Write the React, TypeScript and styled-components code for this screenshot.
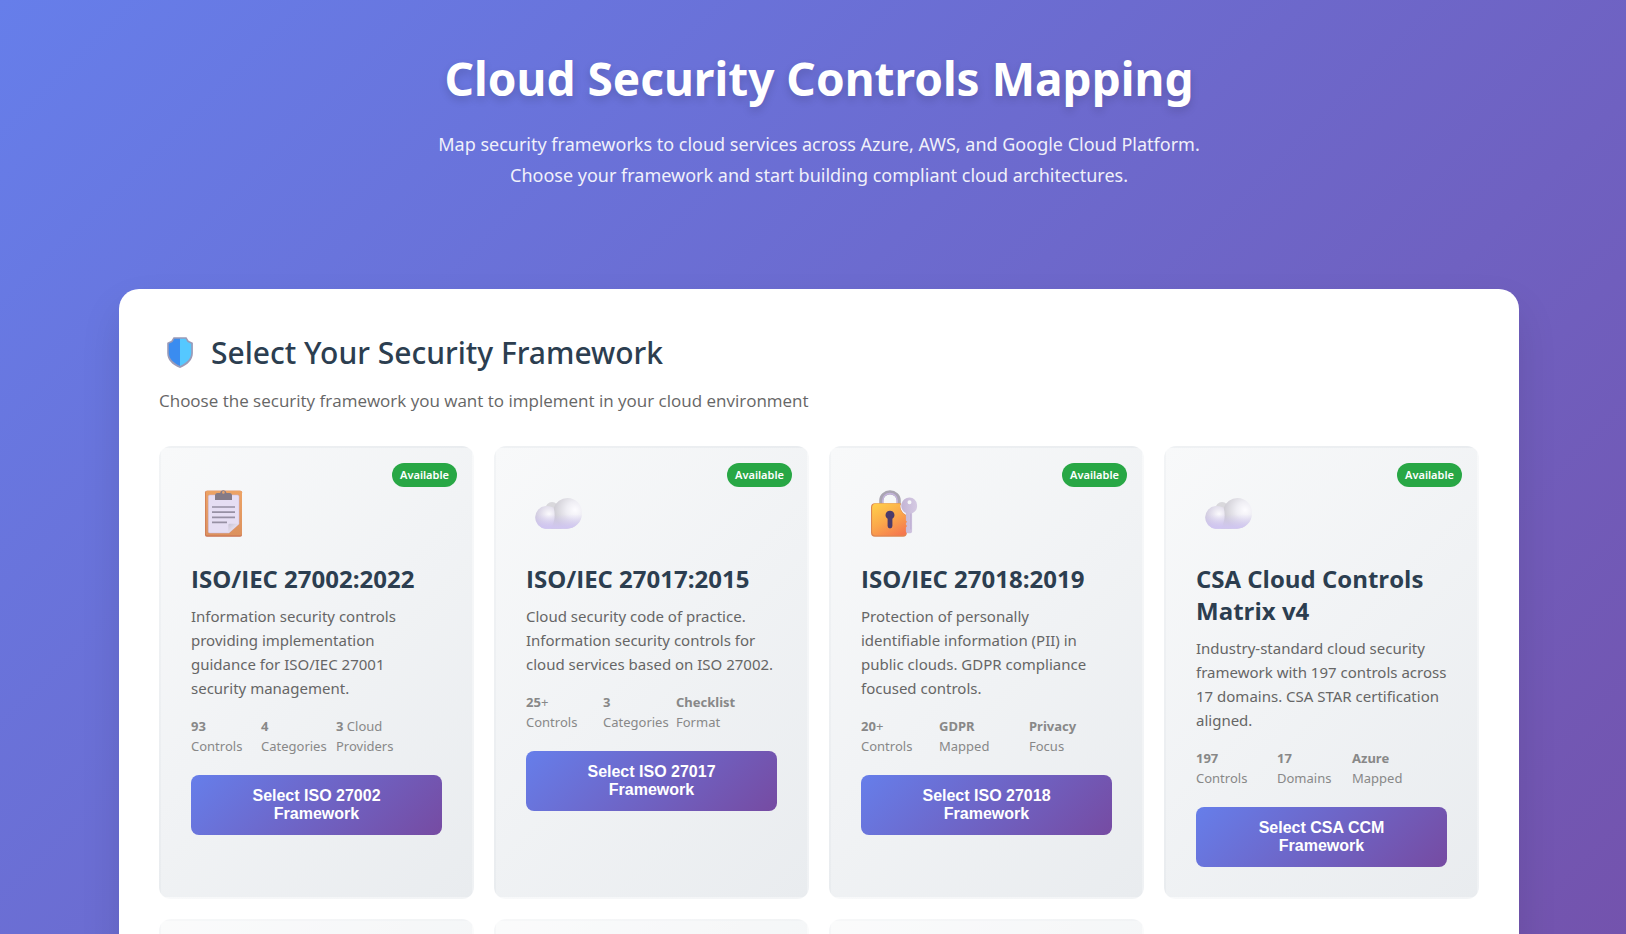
import React from 'react';
import styled, { createGlobalStyle } from 'styled-components';

const GlobalStyle = createGlobalStyle`
  * { box-sizing: border-box; margin: 0; padding: 0; }
  body { font-family: "Noto Sans", "Open Sans", sans-serif; color: #333; }
`;

const Page = styled.div`
  height: 100vh;
  overflow: hidden;
  padding-left: 12px;
  background: linear-gradient(135deg, #667eea 0%, #764ba2 100%) 0 0 / 100% 150vh;
`;

const Container = styled.div`
  max-width: 1400px;
  margin: 0 auto;
`;

const Hero = styled.header`
  padding: 40px 20px 98px;
  text-align: center;
  color: #fff;
`;

const HeroTitle = styled.h1`
  margin-bottom: 13px;
  font-size: 46px;
  font-weight: 700;
  line-height: 76px;
  text-shadow: 0 4px 8px rgba(0, 0, 0, 0.15);
`;

const HeroText = styled.p`
  max-width: 800px;
  margin: 0 auto;
  font-size: 18px;
  line-height: 31px;
  opacity: 0.9;
`;

const Panel = styled.main`
  padding: 40px;
  border-radius: 20px;
  background: #fff;
  box-shadow: 0 20px 40px rgba(0, 0, 0, 0.1);
`;

const SectionTitle = styled.h2`
  display: flex;
  align-items: center;
  gap: 10px;
  margin-bottom: 9px;
  color: #2c3e50;
  font-size: 30px;
  font-weight: 500;
  line-height: 48px;
`;

const SectionText = styled.p`
  margin-bottom: 31px;
  color: #666;
  font-family: "Open Sans", "Noto Sans", sans-serif;
  font-size: 17px;
  line-height: 29px;
`;

const CardGrid = styled.div`
  display: grid;
  grid-template-columns: repeat(auto-fit, minmax(300px, 1fr));
  gap: 20px;
`;

const Card = styled.article<{ $upcoming?: boolean }>`
  position: relative;
  min-height: 240px;
  padding: 30px;
  border: 2px solid transparent;
  border-radius: 12px;
  background: linear-gradient(135deg, #f8f9fa 0%, #e9ecef 100%);
  opacity: ${(p) => (p.$upcoming ? 0.6 : 1)};
`;

const Badge = styled.span`
  position: absolute;
  top: 15px;
  right: 15px;
  padding: 0 8px;
  border-radius: 12px;
  background: #28a745;
  color: #fff;
  font-size: 11px;
  font-weight: 600;
  line-height: 24px;
`;

const CardIcon = styled.div`
  height: 70px;
  margin-bottom: 15px;
`;

const CardTitle = styled.h3`
  margin-bottom: 9px;
  color: #2c3e50;
  font-family: "Open Sans", "Noto Sans", sans-serif;
  font-size: 24px;
  font-weight: 700;
  line-height: 32px;
`;

const CardText = styled.p`
  margin-bottom: 16px;
  color: #666;
  font-size: 15px;
  line-height: 24px;
`;

const Stats = styled.div<{ $columns: string }>`
  display: grid;
  grid-template-columns: ${(p) => p.$columns} 70px;
  margin-bottom: 19px;
  color: #888;
  font-size: 13px;
  line-height: 20px;
`;

const Stat = styled.span`
  padding-right: 4px;
`;

const SelectButton = styled.button`
  display: block;
  width: 100%;
  padding: 12px 40px;
  border: none;
  border-radius: 8px;
  background: linear-gradient(135deg, #667eea 0%, #764ba2 100%);
  color: #fff;
  font-family: "Liberation Sans", Arial, sans-serif;
  font-size: 16px;
  font-weight: 600;
  line-height: 18px;
  cursor: pointer;
`;

const ShieldIcon = () => (
  <svg width="42" height="46" viewBox="0 1 42 46" aria-hidden="true">
    <path d="M14.500 8.200h13l2.200 3.600 4.200 2v10.400c0 6.500-5 11.500-12.900 14.800C13 35.700 8.200 30.700 8.200 24.200V13.800l4.200-2z" fill="#9b9bb8" />
    <path d="M15.400 9.800H21v27.200c-7-3.200-11.200-7.600-11.200-13.200v-9l3.700-1.900z" fill="#3a8cf0" />
    <path d="M26.600 9.800H21v27.200c7-3.200 11.200-7.600 11.200-13.200v-9l-3.700-1.900z" fill="#55c8ff" />
  </svg>
);

const ClipboardIcon = () => (
  <svg width="65" height="70" viewBox="0 0 65 70" aria-hidden="true">
    <defs>
      <linearGradient id="board" x1="0" y1="0" x2="0" y2="1">
        <stop offset="0" stopColor="#eda365" />
        <stop offset="1" stopColor="#dc915e" />
      </linearGradient>
      <linearGradient id="fold" x1="0" y1="0" x2="1" y2="1">
        <stop offset="0" stopColor="#c9c3d4" />
        <stop offset="0.6" stopColor="#e8e2f2" />
      </linearGradient>
    </defs>
    <rect x="14" y="12.700" width="37" height="46" rx="1.800" fill="#c97152" />
    <rect x="14.600" y="12.700" width="36.400" height="44.800" rx="1.500" fill="url(#board)" />
    <path d="M18.800 17h27.700a1.500 1.500 0 0 1 1.500 1.500V46L38 55H18.800a1.500 1.500 0 0 1-1.500-1.500v-35A1.500 1.500 0 0 1 18.800 17z" fill="#e6def3" stroke="#c9b9dc" strokeWidth="0.500" />
    <path d="M37.400 55v-8a1.200 1.200 0 0 1 1.200-1.200H48z" fill="url(#fold)" />
    <path d="M21 29h23M21 34.200h23M21 39.300h23M21 44.400h15" stroke="#9790a4" strokeWidth="1.700" />
    <path d="M24 22v-4.500a2.500 2.500 0 0 1 2.500-2.500h2.700a3.200 3.200 0 0 1 6.300 0h3a2.500 2.500 0 0 1 2.500 2.500V22z" fill="#837a87" />
    <circle cx="32.400" cy="14.400" r="1.300" fill="#e6a26e" />
  </svg>
);

const CloudIcon = ({ id }: { id: string }) => (
  <svg width="65" height="70" viewBox="0 0 65 70" aria-hidden="true">
    <defs>
      <radialGradient id={`${id}-right`} gradientUnits="userSpaceOnUse" cx="49" cy="32" r="21">
        <stop offset="0" stopColor="#fdfcff" />
        <stop offset="0.400" stopColor="#efeef4" />
        <stop offset="1" stopColor="#cfcdd4" />
      </radialGradient>
      <radialGradient id={`${id}-left`} gradientUnits="userSpaceOnUse" cx="23" cy="36" r="14">
        <stop offset="0" stopColor="#fbfafd" />
        <stop offset="1" stopColor="#cfc9de" />
      </radialGradient>
      <linearGradient id={`${id}-base`} x1="0" y1="30" x2="0" y2="51" gradientUnits="userSpaceOnUse">
        <stop offset="0.300" stopColor="#d0c5f3" stopOpacity="0" />
        <stop offset="1" stopColor="#d0c5f3" />
      </linearGradient>
    </defs>
    <circle cx="26" cy="30.500" r="6.500" fill="#d9d8dc" />
    <path d="M19.500 28a11.400 11.400 0 0 0 0 22.700h16V36c-2-4-8-8-16-8z" fill={`url(#${id}-left)`} />
    <path d="M41.500 20a14.700 14.700 0 0 0-13.800 10c2 7 1 14-2.700 20.700h16A15.300 15.300 0 0 0 56 35.300 14.700 14.700 0 0 0 41.500 20z" fill={`url(#${id}-right)`} />
    <path d="M19.500 28a11.400 11.400 0 0 0 0 22.700H41A15.300 15.300 0 0 0 56 35.300V31z" fill={`url(#${id}-base)`} />
  </svg>
);

const LockIcon = () => (
  <svg width="65" height="70" viewBox="0 0 65 70" aria-hidden="true">
    <defs>
      <linearGradient id="lock-body" x1="0.200" y1="0" x2="0.800" y2="1">
        <stop offset="0" stopColor="#ffcb4b" />
        <stop offset="0.500" stopColor="#fba74b" />
        <stop offset="1" stopColor="#f5784f" />
      </linearGradient>
      <linearGradient id="lock-key" x1="0" y1="0" x2="1" y2="0">
        <stop offset="0" stopColor="#c3b4d5" />
        <stop offset="1" stopColor="#d5cae3" />
      </linearGradient>
    </defs>
    <path d="M20.300 27v-4.500a8.700 8.200 0 0 1 17.400 0V27" fill="none" stroke="#aaa5b2" strokeWidth="4.200" />
    <path d="M21.700 27v-4.500a7.300 7 0 0 1 14.600 0V27" fill="none" stroke="#c4b3dc" strokeWidth="1.400" />
    <path d="M14 25.300h25.800a9.600 9.600 0 0 0 4.600 11.300l1.400 1.600V55a3.700 3.700 0 0 1-3.700 3.700H14a4 4 0 0 1-4-4V29.300a4 4 0 0 1 4-4z" fill="#dd8650" />
    <path d="M15 25.500h24.500a9.600 9.600 0 0 0 4.900 11.600l1.100 1.500V54a3.500 3.500 0 0 1-3.500 3.500H14.800a3.700 3.700 0 0 1-3.700-3.700V29.200a3.700 3.700 0 0 1 3.900-3.700z" fill="url(#lock-body)" />
    <path d="M29 32.700a4.400 4.400 0 0 0-2.400 8.100v7.300a2.400 2.400 0 0 0 4.800 0v-7.300A4.400 4.400 0 0 0 29 32.700z" fill="#4b3b6b" />
    <path d="M48.500 19.500a8.200 8.200 0 0 0-3.600 15.600v7.400l1.200 1.300-1.200 1.400v1.400l1.200 1.400-1.200 1.400v4.200a1.800 1.800 0 0 0 1.800 1.700h2.600a1.800 1.800 0 0 0 1.800-1.700V35.200a8.200 8.200 0 0 0-2.600-15.700zm0 2.700a2 2 0 1 1 0 4 2 2 0 0 1 0-4z" fill="url(#lock-key)" fillRule="evenodd" />
    <path d="M49.800 35.500v16" stroke="#b9a9cf" strokeWidth="0.800" />
  </svg>
);

type Framework = {
  title: string;
  text: string;
  icon: React.ReactNode;
  columns: string;
  stats: [string, string][];
  action: string;
};

const frameworks: Framework[] = [
  {
    title: 'ISO/IEC 27002:2022',
    text: 'Information security controls providing implementation guidance for ISO/IEC 27001 security management.',
    icon: <ClipboardIcon />,
    columns: '70px 75px',
    stats: [['93', ' Controls'], ['4', ' Categories'], ['3', ' Cloud Providers']],
    action: 'Select ISO 27002 Framework',
  },
  {
    title: 'ISO/IEC 27017:2015',
    text: 'Cloud security code of practice. Information security controls for cloud services based on ISO 27002.',
    icon: <CloudIcon id="cloud-practice" />,
    columns: '77px 73px',
    stats: [['25', '+ Controls'], ['3', ' Categories'], ['Checklist', ' Format']],
    action: 'Select ISO 27017 Framework',
  },
  {
    title: 'ISO/IEC 27018:2019',
    text: 'Protection of personally identifiable\u00a0information (PII) in public clouds. GDPR compliance focused controls.',
    icon: <LockIcon />,
    columns: '78px 90px',
    stats: [['20', '+ Controls'], ['GDPR', ' Mapped'], ['Privacy', ' Focus']],
    action: 'Select ISO 27018 Framework',
  },
  {
    title: 'CSA Cloud Controls Matrix v4',
    text: 'Industry-standard cloud security framework with 197 controls across 17 domains. CSA STAR certification aligned.',
    icon: <CloudIcon id="cloud-matrix" />,
    columns: '81px 75px',
    stats: [['197', ' Controls'], ['17', ' Domains'], ['Azure', ' Mapped']],
    action: 'Select CSA CCM Framework',
  },
];

const FrameworkCard = ({ title, text, icon, columns, stats, action }: Framework) => (
  <Card>
    <Badge>Available</Badge>
    <CardIcon>{icon}</CardIcon>
    <CardTitle>{title}</CardTitle>
    <CardText>{text}</CardText>
    <Stats $columns={columns}>
      {stats.map(([value, label]) => (
        <Stat key={label}>
          <strong>{value}</strong>
          {label}
        </Stat>
      ))}
    </Stats>
    <SelectButton type="button">{action}</SelectButton>
  </Card>
);

export default function App() {
  return (
    <>
      <GlobalStyle />
      <Page>
        <Container>
          <Hero>
            <HeroTitle>Cloud Security Controls Mapping</HeroTitle>
            <HeroText>
              Map security frameworks to cloud services across Azure, AWS, and Google Cloud Platform. Choose your
              framework and start building compliant cloud architectures.
            </HeroText>
          </Hero>
          <Panel>
            <SectionTitle>
              <ShieldIcon />
              Select Your Security Framework
            </SectionTitle>
            <SectionText>Choose the security framework you want to implement in your cloud environment</SectionText>
            <CardGrid>
              {frameworks.map((framework) => (
                <FrameworkCard key={framework.title} {...framework} />
              ))}
              <Card $upcoming />
              <Card $upcoming />
              <Card $upcoming />
            </CardGrid>
          </Panel>
        </Container>
      </Page>
    </>
  );
}
